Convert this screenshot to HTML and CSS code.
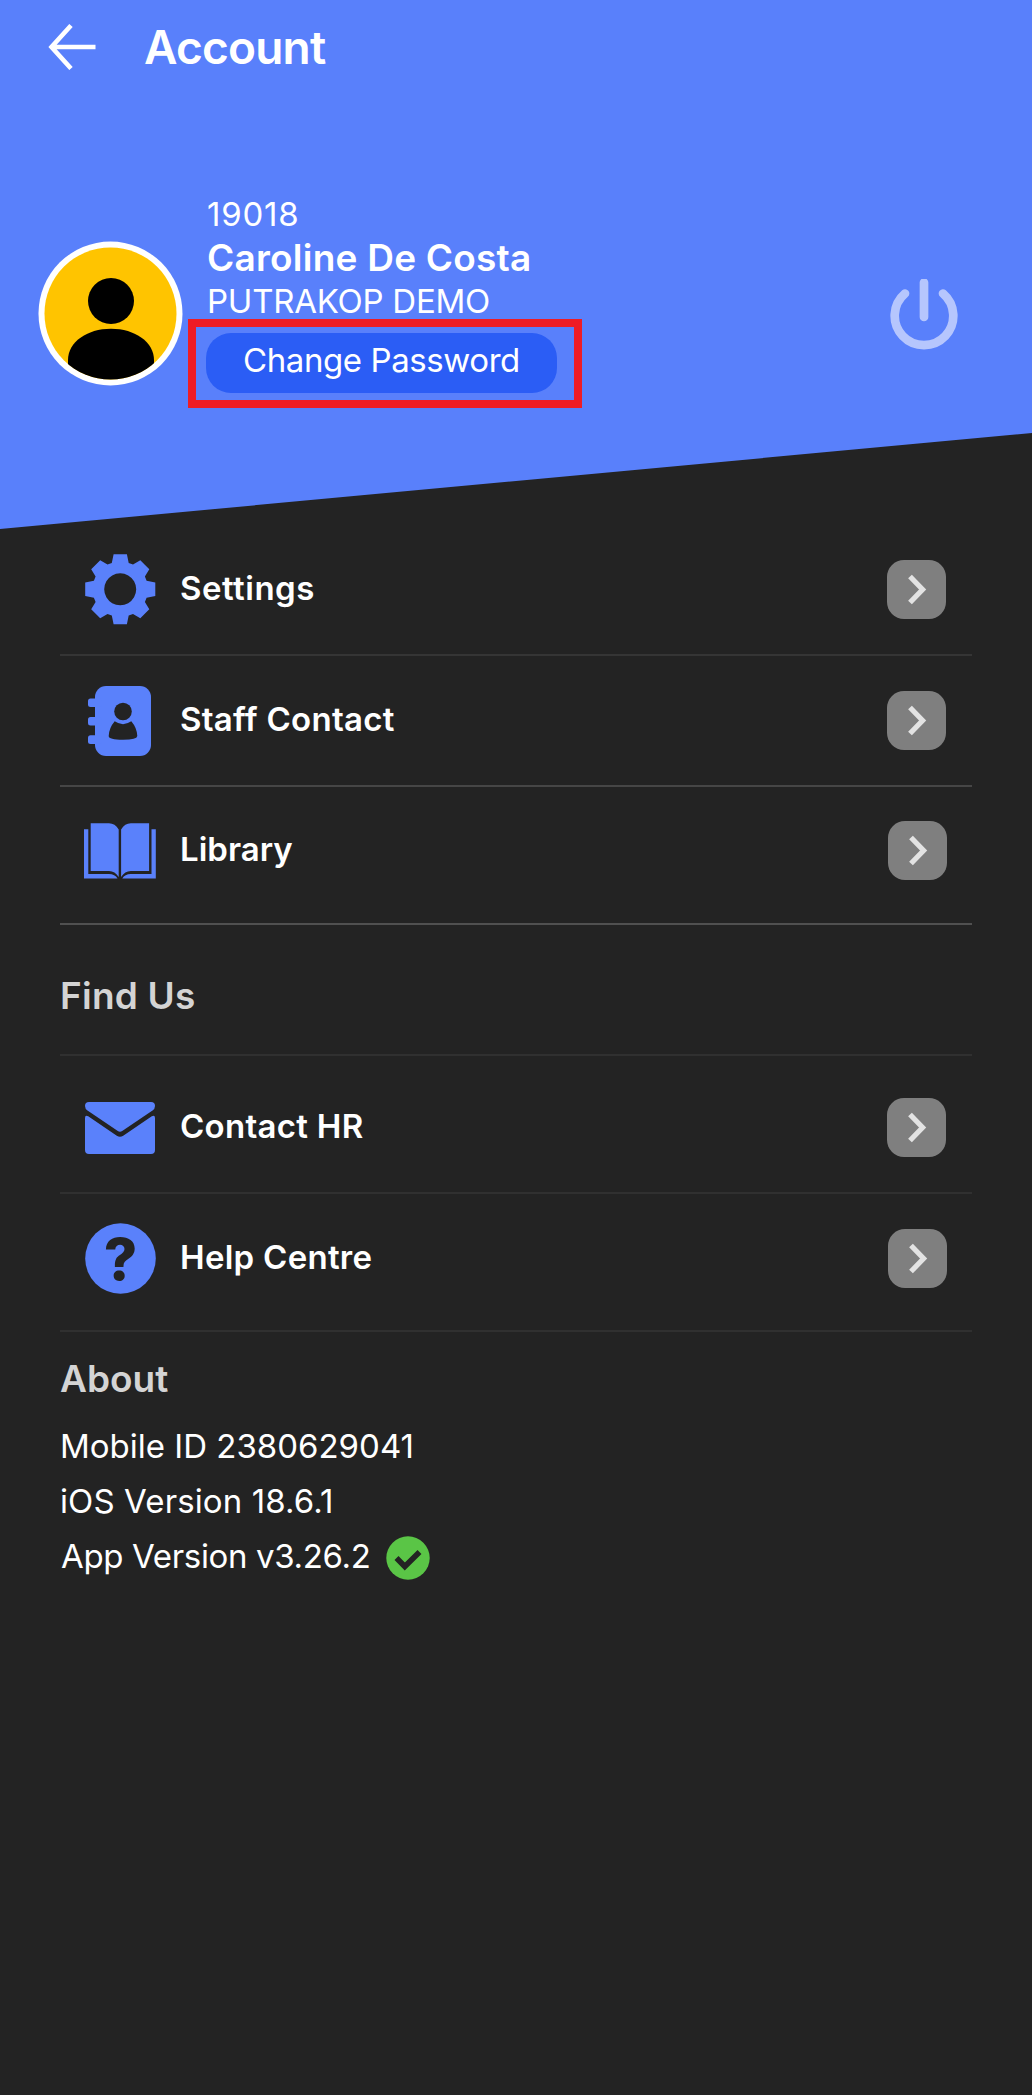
FILE: index.html
```html
<!DOCTYPE html>
<html lang="en">
<head>
    <meta charset="UTF-8">
    <title>Account</title>
    <link rel="stylesheet" href="styles.css">
</head>
<body>
    <header class="hero">
        <div class="topbar">
            <svg class="back" width="48" height="46" viewBox="0 0 48 46">
                <path d="M23 1.5 L3.5 23 L23 44.5 M3.5 23 H47.5" fill="none" stroke="#fff" stroke-width="4.6"/>
            </svg>
            <h1>Account</h1>
        </div>

        <div class="profile">
            <svg class="avatar" width="145" height="145" viewBox="0 0 145 145">
                <defs>
                    <clipPath id="face"><circle cx="72.5" cy="72.5" r="66"/></clipPath>
                </defs>
                <circle cx="72.5" cy="72.5" r="72" fill="#fff"/>
                <g clip-path="url(#face)">
                    <rect width="145" height="145" fill="#ffc400"/>
                    <circle cx="73" cy="60" r="23"/>
                    <path d="M30 119 C30 101 49 87.7 73 87.7 C97 87.7 116 101 116 119 V145 H30 Z"/>
                </g>
            </svg>
            <div class="info">
                <div class="staff-no">19018</div>
                <div class="name">Caroline De Costa</div>
                <div class="company">PUTRAKOP DEMO</div>
                <div class="password-wrap">
                    <button class="password">Change Password</button>
                </div>
            </div>
            <svg class="power" width="68" height="72" viewBox="0 0 68 72">
                <path d="M15 15.5 A29.3 29.3 0 1 0 53 15.5 M34 4.5 V39" transform="translate(0 -1)" fill="none" stroke="#b6c6fd" stroke-width="8.7" stroke-linecap="round"/>
            </svg>
        </div>
    </header>

    <main class="content">
        <div class="row settings">
            <span class="icon">
                <svg width="71" height="71" viewBox="0 0 71 71">
                    <path fill-rule="evenodd" d="M28.6 .2 H41.9 L43.7 8.9 L48 10.6 L55.3 6.2 L64.3 15.2 L59.9 22.5 L61.6 26.8 L70.3 28.6 V41.9 L61.6 43.7 L59.9 48 L64.3 55.3 L55.3 64.3 L48 59.9 L43.7 61.6 L41.9 70.3 H28.6 L26.8 61.6 L22.5 59.9 L15.2 64.3 L6.2 55.3 L10.6 48 L8.9 43.7 L.2 41.9 V28.6 L8.9 26.8 L10.6 22.5 L6.2 15.2 L15.2 6.2 L22.5 10.6 L26.8 8.9 Z M35.2 19.3 a16 16 0 1 0 .01 0 Z"/>
                </svg>
            </span>
            <span class="label">Settings</span>
            <svg class="go" width="59" height="59" viewBox="0 0 59 59"><rect width="59" height="59" rx="17"/><path d="M23 16.5 L35.6 29.5 L23 42.5"/></svg>
        </div>

        <div class="row staff">
            <span class="icon">
                <svg width="63" height="70" viewBox="0 0 63 70">
                    <rect x="7" width="56" height="70" rx="11"/>
                    <rect y="12.5" width="14" height="8.6" rx="2.5"/>
                    <rect y="31" width="14" height="8.6" rx="2.5"/>
                    <rect y="49.3" width="14" height="8.6" rx="2.5"/>
                    <circle class="hole" cx="35" cy="25.5" r="8.8"/>
                    <path class="hole" d="M26.7 35.3 Q35 41 43.3 35.3 Q49 42 49.3 50 Q49 53.8 35 53.8 Q20.8 53.8 20.7 50 Q21 42 26.7 35.3 Z"/>
                </svg>
            </span>
            <span class="label">Staff Contact</span>
            <svg class="go" width="59" height="59" viewBox="0 0 59 59"><rect width="59" height="59" rx="17"/><path d="M23 16.5 L35.6 29.5 L23 42.5"/></svg>
        </div>

        <div class="row library">
            <span class="icon">
                <svg width="72" height="56" viewBox="0 0 72 56">
                    <g id="page">
                        <path d="M6.7 .2 H25 Q31 .2 34.7 6.5 V54 Q31 48 25 48 H6.7 Z"/>
                        <path d="M0 6.3 H4.3 V51 H25 Q31 51 33.5 55.6 H0 Z"/>
                    </g>
                    <use href="#page" transform="matrix(-1 0 0 1 71.8 0)"/>
                </svg>
            </span>
            <span class="label">Library</span>
            <svg class="go" width="59" height="59" viewBox="0 0 59 59"><rect width="59" height="59" rx="17"/><path d="M23 16.5 L35.6 29.5 L23 42.5"/></svg>
        </div>

        <h2 class="find-us">Find Us</h2>

        <div class="row hr">
            <span class="icon">
                <svg width="70" height="52" viewBox="0 0 70 52">
                    <path d="M4 0 H66 Q70 0 70 4 Q70 6.8 67.5 8.6 L37.2 29 Q35 30.4 32.8 29 L2.5 8.6 Q0 6.8 0 4 Q0 0 4 0 Z"/>
                    <path d="M0 16 Q0 12.6 3.2 14.2 L31.8 33.7 Q35 35.8 38.2 33.7 L66.8 14.2 Q70 12.6 70 16 V48 Q70 52 66 52 H4 Q0 52 0 48 Z"/>
                </svg>
            </span>
            <span class="label">Contact HR</span>
            <svg class="go" width="59" height="59" viewBox="0 0 59 59"><rect width="59" height="59" rx="17"/><path d="M23 16.5 L35.6 29.5 L23 42.5"/></svg>
        </div>

        <div class="row help">
            <span class="icon">
                <svg width="71" height="71" viewBox="0 0 71 71">
                    <circle cx="35.5" cy="35.5" r="35.3"/>
                    <text class="hole" x="35.5" y="56.5" text-anchor="middle">?</text>
                </svg>
            </span>
            <span class="label">Help Centre</span>
            <svg class="go" width="59" height="59" viewBox="0 0 59 59"><rect width="59" height="59" rx="17"/><path d="M23 16.5 L35.6 29.5 L23 42.5"/></svg>
        </div>

        <h2 class="about">About</h2>
        <div class="line mobile-id">Mobile ID 2380629041</div>
        <div class="line ios">iOS Version 18.6.1</div>
        <div class="line">
            <span class="app">App Version v3.26.2</span>
            <svg class="check" width="44" height="44" viewBox="0 0 44 44">
                <circle cx="22" cy="22" r="21.7" fill="#5ac546"/>
                <path d="M10.5 22 L18.8 30.5 L33.5 16" fill="none" stroke="#232323" stroke-width="5.6"/>
            </svg>
        </div>
    </main>
</body>
</html>
```
FILE: styles.css
```css
* {
    box-sizing: border-box;
}
body {
    margin: 0;
    min-height: 2095px;
    background: #232323;
    color: #fff;
    font-family: Inter, "Liberation Sans", sans-serif;
    font-size: 33px;
}
h1, h2 {
    margin: 0;
    font-weight: 600;
}

/* header */
.hero {
    height: 529px;
    background: #5980fb;
    clip-path: polygon(0 0, 100% 0, 100% 433px, 0 100%);
}
.topbar {
    display: flex;
    align-items: center;
    height: 93px;
    padding-left: 48px;
}
.topbar h1 {
    margin-left: 48px;
    font-size: 46px;
    letter-spacing: -0.8px;
}
.profile {
    display: flex;
    align-items: flex-start;
    padding: 99px 74px 0 38px;
}
.avatar {
    margin-top: 49px;
}
.info {
    margin-left: 23px;
    line-height: 44px;
}
.staff-no {
    padding-left: 1px;
    letter-spacing: 0.8px;
}
.name {
    padding-left: 1px;
    font-size: 37px;
    font-weight: 600;
    line-height: 43px;
    letter-spacing: 0.23px;
}
.company {
    padding-left: 1px;
    letter-spacing: -0.25px;
}
.password-wrap {
    position: relative;
    margin-top: 10px;
}
.password-wrap::after {
    content: "";
    position: absolute;
    top: -14px;
    left: -18px;
    box-sizing: border-box;
    width: 394px;
    height: 89px;
    border: 8px solid #ee1c25;
}
.password {
    display: block;
    width: 351px;
    height: 60px;
    padding: 0 0 6px;
    border: none;
    border-radius: 25px;
    background: #2b5df5;
    color: #fff;
    font-family: inherit;
    font-size: 33px;
    letter-spacing: -0.42px;
}
.power {
    margin: 87px 0 0 auto;
}

/* menu rows */
.content {
    margin-top: -5px;
    padding: 0 60px;
}
.row {
    display: flex;
    align-items: center;
    height: 132px;
    padding-right: 26px;
    border-bottom: 2px solid #303030;
}
.icon {
    display: flex;
    justify-content: center;
    width: 120px;
}
.icon svg {
    fill: #5a81fb;
}
.icon .hole {
    fill: #232323;
}
.icon text {
    font-size: 58px;
    font-weight: 800;
}
.label {
    padding-bottom: 3px;
    font-weight: 600;
    letter-spacing: 0.28px;
}
.go {
    margin-left: auto;
    fill: #7f7f7f;
}
.go path {
    fill: none;
    stroke: #e3e3e3;
    stroke-width: 5.2;
}
.settings {
    border-color: #353535;
}
.settings .label {
    letter-spacing: 0.5px;
}
.staff {
    height: 131px;
    border-color: #464646;
}
.staff .icon {
    padding-right: 1px;
}
.library {
    height: 138px;
    padding-right: 25px;
    padding-bottom: 9px;
    border-color: #505050;
}
.library .label {
    letter-spacing: 0;
}
.hr {
    height: 138px;
    padding-top: 7px;
}
.help {
    height: 138px;
    padding-right: 25px;
    padding-bottom: 7px;
}

/* sections */
h2 {
    color: #d4d4d4;
    font-size: 37px;
}
.find-us {
    height: 131px;
    padding-top: 12px;
    border-bottom: 2px solid #303030;
    line-height: 118px;
    letter-spacing: 0.22px;
}
.about {
    padding-top: 7px;
    line-height: 79px;
    letter-spacing: 0;
}
.line {
    display: flex;
    align-items: center;
    height: 55px;
}
.ios {
    letter-spacing: 0.11px;
}
.app {
    padding-left: 1px;
    letter-spacing: -0.34px;
}
.check {
    margin: 4px 0 0 15px;
}
```
